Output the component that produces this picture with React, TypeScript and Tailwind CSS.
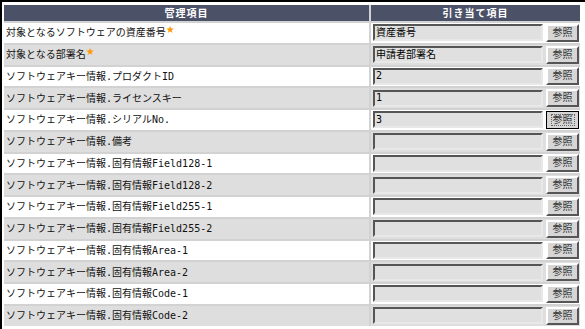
import React from 'react';

// 管理項目と引き当て項目のマッピング表
type Row = {
  label: string;
  required?: boolean;
  value: string;
  focused?: boolean;
};

const rows: Row[] = [
  { label: '対象となるソフトウェアの資産番号', required: true, value: '資産番号' },
  { label: '対象となる部署名', required: true, value: '申請者部署名' },
  { label: 'ソフトウェアキー情報.プロダクトID', value: '2' },
  { label: 'ソフトウェアキー情報.ライセンスキー', value: '1' },
  { label: 'ソフトウェアキー情報.シリアルNo.', value: '3', focused: true },
  { label: 'ソフトウェアキー情報.備考', value: '' },
  { label: 'ソフトウェアキー情報.固有情報Field128-1', value: '' },
  { label: 'ソフトウェアキー情報.固有情報Field128-2', value: '' },
  { label: 'ソフトウェアキー情報.固有情報Field255-1', value: '' },
  { label: 'ソフトウェアキー情報.固有情報Field255-2', value: '' },
  { label: 'ソフトウェアキー情報.固有情報Area-1', value: '' },
  { label: 'ソフトウェアキー情報.固有情報Area-2', value: '' },
  { label: 'ソフトウェアキー情報.固有情報Code-1', value: '' },
  { label: 'ソフトウェアキー情報.固有情報Code-2', value: '' },
];

// 半角は等幅、全角はCJKフォントへフォールバック
const font = { fontFamily: '"DejaVu Sans Mono", "Noto Sans CJK JP", monospace' };

const RefButton: React.FC<{ focused?: boolean }> = ({ focused }) => (
  <button
    type="button"
    className={
      focused
        ? 'w-[33px] h-[18px] flex items-center justify-center bg-[#d6d6d6] border border-black text-[10px] text-[#333] leading-none'
        : 'w-[33px] h-[18px] flex items-center justify-center bg-[#d6d6d6] border-2 border-t-white border-l-white border-b-[#555] border-r-[#555] text-[10px] text-[#333] leading-none'
    }
  >
    <span className={focused ? 'outline outline-1 outline-dotted outline-[#666] px-[1px]' : ''}>参照</span>
  </button>
);

export default function App() {
  return (
    <div className="w-[585px] h-[329px] bg-white border-t-2 border-l-2 border-black pl-[2px] pt-[3px] overflow-hidden" style={font}>
      <div className="w-[576px] grid grid-cols-[365px_209px] gap-[2px] bg-[#d2d2d2]">
        {/* Header */}
        <div className="h-4 bg-[#4b5167] text-white text-[10px] font-bold flex items-center justify-center tracking-[1px]">管理項目</div>
        <div className="h-4 bg-[#4b5167] text-white text-[10px] font-bold flex items-center justify-center tracking-[1px]">引き当て項目</div>

        {rows.map((r, i) => {
          const bg = i % 2 === 0 ? 'bg-white' : 'bg-[#dedede]';
          return (
            <React.Fragment key={r.label}>
              <div className={`h-[19.75px] ${bg} flex items-center pl-[2px] text-[10px] text-[#111]`}>
                <span>{r.label}</span>
                {r.required && (
                  <span className="font-['DejaVu_Sans'] text-[#ff9900] text-[10px] leading-none -mt-[6px]">★</span>
                )}
              </div>
              <div className={`h-[19.75px] ${bg} flex items-center pl-[2px] gap-[3px]`}>
                <div className="w-[170px] h-[17px] bg-[#e0e0e0] border-2 border-t-[#555] border-l-[#555] border-b-[#e8e8e8] border-r-[#e8e8e8] flex items-center px-[1px] text-[10px] text-black leading-none">
                  {r.value}
                </div>
                <RefButton focused={r.focused} />
              </div>
            </React.Fragment>
          );
        })}
      </div>
    </div>
  );
}
